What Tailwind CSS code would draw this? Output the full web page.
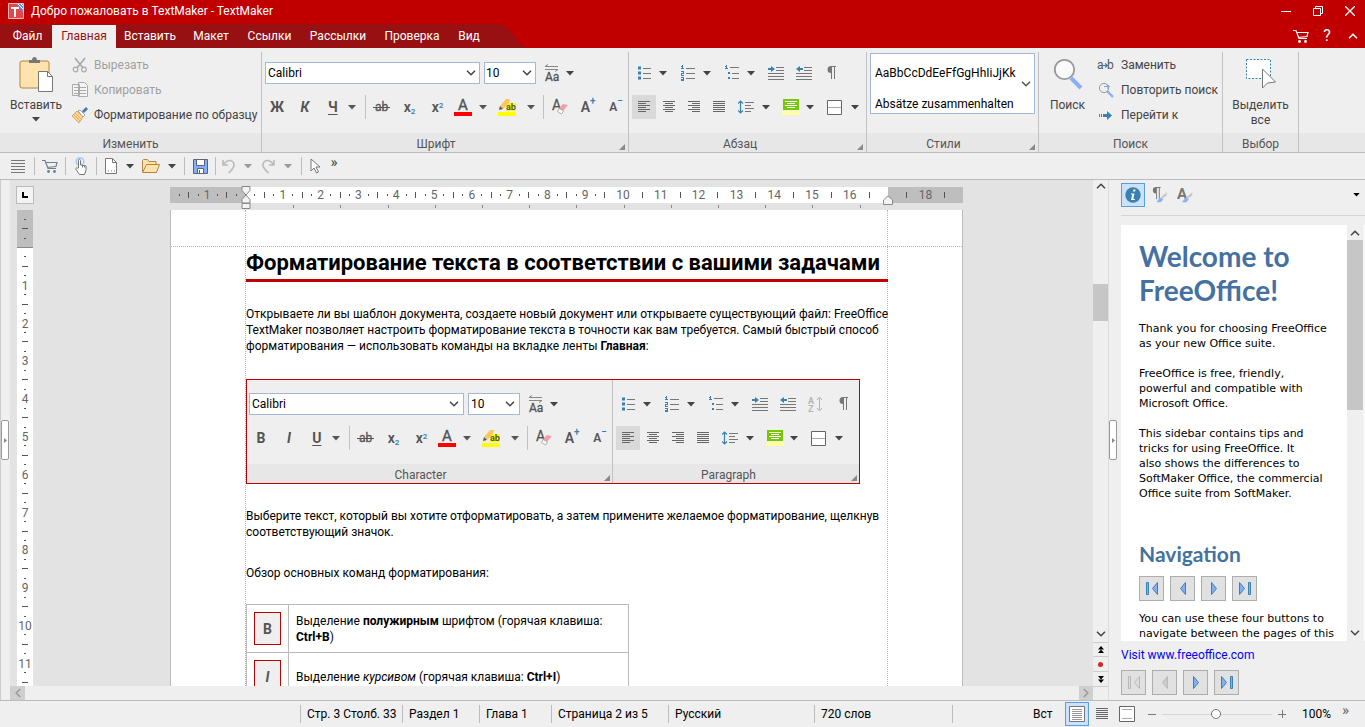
<!DOCTYPE html>
<html lang="ru">
<head>
<meta charset="utf-8">
<title>Добро пожаловать в TextMaker - TextMaker</title>
<script src="https://cdn.jsdelivr.net/npm/@tailwindcss/browser@4"></script>
</head>
<body class="h-screen flex flex-col overflow-hidden bg-[#efefef] text-[12px] leading-[16px] text-[#333] font-['Roboto','Noto_Sans',sans-serif]">

<svg width="0" height="0" class="hidden">
  <symbol id="caret" viewBox="0 0 8 5"><path d="M0 0h8L4 4.5z" fill="currentColor"/></symbol>
  <symbol id="chev" viewBox="0 0 10 6"><path d="M1 .8l4 4 4-4" fill="none" stroke="currentColor" stroke-width="1.5"/></symbol>
  <symbol id="corner" viewBox="0 0 6 6"><path d="M6 0v6H0z" fill="#8a8a8a"/></symbol>
  <symbol id="aa" viewBox="0 0 18 18"><path d="M1 2.5h13M4 .5L1 2.5M1 5.5h13M11 7.5l3-2" stroke="#888" fill="none"/><text x="1" y="17" font-size="12" fill="#555" stroke="#555" stroke-width=".3">Aa</text></symbol>
  <symbol id="strike" viewBox="0 0 18 14"><text x="2" y="11" font-size="12" fill="#555" stroke="#555" stroke-width=".3">ab</text><path d="M0 7.500h17" stroke="#555"/></symbol>
  <symbol id="fcolor" viewBox="0 0 18 18"><text x="4" y="12" font-size="15" fill="#555" stroke="#555" stroke-width=".4">A</text><path d="M0 14h18v4H0z" fill="#f00"/></symbol>
  <symbol id="hilite" viewBox="0 0 18 18"><path d="M8 5h10v8H8z" fill="#ff0"/><path d="M2 8L8 1h4l-1 4-6 6z" fill="#ffc65c"/><path d="M2 8l3 3-4 1z" fill="#555"/><text x="8" y="12" font-size="9" font-weight="700" fill="#555">ab</text><path d="M0 14h18v4H0z" fill="#ff0"/></symbol>
  <symbol id="eraser" viewBox="0 0 18 18"><text x="1" y="12" font-size="14" fill="#555" stroke="#555" stroke-width=".3">A</text><path d="M12 6l5 1-5 6-4-3z" fill="#f5a0a8"/><path d="M6.500 13.500l2-3 4 2.500-2 3z" fill="#fff" stroke="#999" stroke-width=".8"/></symbol>
  <symbol id="bullets" viewBox="0 0 14 14"><path d="M0 .5h3v3H0zM0 5.500h3v3H0zM0 10.500h3v3H0z" fill="#3a80b0"/><path d="M5 2.500h8M5 7.500h8M5 12.500h8" stroke="#777"/></symbol>
  <symbol id="numbers" viewBox="0 0 14 16"><path d="M0 1.500h2M1.500 0v4M0 3.500h3M0 6.500h3M2.500 6v2M0 8.500h3M.5 8v2.500M0 10.500h3M0 12.500h3M0 14.500h3M2.500 12v4M0 15.500h3" stroke="#3a80b0" fill="none"/><path d="M5 3.500h9M5 8.500h9M5 13.500h9" stroke="#777"/></symbol>
  <symbol id="multi" viewBox="0 0 14 16"><path d="M0 1.500h2M1.500 0v4M0 3.500h3" stroke="#3a80b0"/><path d="M3 7h2v2H3zM3 12h2v2H3z" fill="#3a80b0"/><path d="M5 2.500h9M7 8.500h7M7 13.500h7" stroke="#777"/></symbol>
  <symbol id="indent" viewBox="0 0 16 16"><path d="M8 2.500h8M8 5.500h8M0 8.500h16M0 11.500h16M0 14.500h16" stroke="#777"/><path d="M0 3h3V1l4 3-4 3V5H0z" fill="#3a80b0"/></symbol>
  <symbol id="outdent" viewBox="0 0 16 16"><path d="M8 2.500h8M8 5.500h8M0 8.500h16M0 11.500h16M0 14.500h16" stroke="#777"/><path d="M7 3H4V1L0 4l4 3V5h3z" fill="#3a80b0"/></symbol>
  <symbol id="sort" viewBox="0 0 16 16"><text x="0" y="8" font-size="9" font-weight="700" fill="#b5b5b5">A</text><text x="0" y="16" font-size="9" font-weight="700" fill="#b5b5b5">Z</text><path d="M11.500 2v12M9 4l2.500-3L14 4M9 12l2.500 3 2.500-3" stroke="#b5b5b5" fill="none"/></symbol>
  <symbol id="pilcrow" viewBox="0 0 10 14"><path d="M4 0h5v1H4zM4 0a3.500 3.500 0 0 0 0 7z" fill="#777"/><path d="M4.500 0v13M7.500 0v13" stroke="#777"/></symbol>
  <symbol id="al" viewBox="0 0 12 12"><path d="M0 .5h12M0 2.500h8M0 4.500h12M0 6.500h8M0 8.500h12M0 10.500h8" stroke="#666"/></symbol>
  <symbol id="ac" viewBox="0 0 12 12"><path d="M0 .5h12M2 2.500h8M0 4.500h12M2 6.500h8M0 8.500h12M2 10.500h8" stroke="#666"/></symbol>
  <symbol id="ar" viewBox="0 0 12 12"><path d="M0 .5h12M4 2.500h8M0 4.500h12M4 6.500h8M0 8.500h12M4 10.500h8" stroke="#666"/></symbol>
  <symbol id="aj" viewBox="0 0 12 12"><path d="M0 .5h12M0 2.500h12M0 4.500h12M0 6.500h12M0 8.500h12M0 10.500h12" stroke="#666"/></symbol>
  <symbol id="spacing" viewBox="0 0 16 14"><path d="M2.500 1v12M0 3.500L2.500 1 5 3.500M0 10.500L2.500 13 5 10.500" stroke="#3a80b0" fill="none" stroke-width="1.200"/><path d="M7 2.500h9M7 5.500h6M7 8.500h9M7 11.500h6" stroke="#777"/></symbol>
  <symbol id="shade" viewBox="0 0 18 16"><path d="M1 0h16v11H1z" fill="#76c800"/><path d="M0 12h18v4H0z" fill="#ffff9e"/><path d="M3 2.500h12M5 4.500h8M3 6.500h12M5 8.500h8" stroke="#fff"/></symbol>
  <symbol id="borders" viewBox="0 0 15 15"><path d="M.5.5h14v14H.5z" fill="#fff" stroke="#666"/><path d="M1 7.500h13" stroke="#aaa"/></symbol>
  <symbol id="cart" viewBox="0 0 16 15"><path d="M0 1.500h3l3 8h8M4 3.500h11l-1 4-9 1" stroke="currentColor" fill="none" stroke-width="1.200"/><circle cx="6.500" cy="12.500" r="1.400" fill="currentColor"/><circle cx="12.500" cy="12.500" r="1.400" fill="currentColor"/></symbol>
  <symbol id="first" viewBox="0 0 12 14"><path d="M.5.5h2v12h-2zM11.500.5v12l-5-6z" fill="#85aef8" stroke="#3a80b0"/></symbol>
  <symbol id="prev" viewBox="0 0 12 14"><path d="M8.500.5v12l-5-6z" fill="#85aef8" stroke="#3a80b0"/></symbol>
  <symbol id="next" viewBox="0 0 12 14"><path d="M3.500.5v12l5-6z" fill="#85aef8" stroke="#3a80b0"/></symbol>
  <symbol id="last" viewBox="0 0 12 14"><path d="M9.500.5h2v12h-2zM.5.5v12l5-6z" fill="#85aef8" stroke="#3a80b0"/></symbol>
  <symbol id="firstoff" viewBox="0 0 12 14"><path d="M.5.5h2v12h-2zM11.500.5v12l-5-6z" fill="#ddd" stroke="#b8b8b8"/></symbol>
  <symbol id="prevoff" viewBox="0 0 12 14"><path d="M8.500.5v12l-5-6z" fill="#ccc" stroke="#b8b8b8"/></symbol>
  <symbol id="undo" viewBox="0 0 14 15"><path d="M1 1v5h5M1.500 5.500C4 1.500 8 .5 10.500 2.500c3 2.500 2 6-4 11.500" fill="none" stroke="#bbb" stroke-width="1.600"/></symbol>
  <symbol id="brush" viewBox="0 0 8 8"><path d="M7.500 0v2.500L4 5 3 4z" fill="#c8c8c8"/><path d="M0 7.500l2.500-3.500L5 5.500 3 7.500z" fill="#8ab0f8"/></symbol>
</svg>

<!-- Title bar -->
<header class="bg-[#c00000] text-white">
  <div class="h-6 flex items-center pl-2 pb-[2px]">
    <svg class="w-4 h-4 mr-[7px]" viewBox="0 0 16 16"><path d="M.5.5h15v15H.5z" fill="#e0484a" stroke="#f3b9b9"/><path d="M8 1h7v9z" fill="#5a8fe0"/><path d="M10 1l5 5M13 1l2 2" stroke="#fff"/><path d="M3 4h8v2H8v8H6V6H3z" fill="#fff"/></svg>
    <h1 class="whitespace-nowrap">Добро пожаловать в TextMaker - TextMaker</h1>
    <div class="ml-auto flex items-center">
      <button aria-label="Свернуть" class="w-8 h-[22px] flex items-center justify-center"><svg class="w-[10px] h-[10px]" viewBox="0 0 10 10"><path d="M0 5.500h10" stroke="#fff"/></svg></button>
      <button aria-label="Восстановить" class="w-8 h-[22px] flex items-center justify-center"><svg class="w-[10px] h-[10px]" viewBox="0 0 10 10"><path d="M.5 2.500h7v7h-7zM2.500 2.500v-2h7v7h-2" fill="none" stroke="#fff"/></svg></button>
      <button aria-label="Закрыть" class="w-[31px] h-[22px] flex items-center justify-center"><svg class="w-[10px] h-[10px]" viewBox="0 0 10 10"><path d="M0 0l10 10M10 0L0 10" stroke="#fff" stroke-width="1.300"/></svg></button>
    </div>
  </div>
  <nav class="h-6 flex items-stretch">
    <div class="flex bg-[#981012]">
      <button class="w-[52px] pl-[3px] text-center">Файл</button>
      <button class="w-16 mt-px pb-[2px] bg-[#efefef] text-[#981012] text-center">Главная</button>
      <button class="w-[68px] text-center">Вставить</button>
      <button class="w-[54px] text-center">Макет</button>
      <button class="w-[63px] text-center">Ссылки</button>
      <button class="w-[74px] text-center">Рассылки</button>
      <button class="w-[74px] text-center">Проверка</button>
      <button class="w-10 text-center">Вид</button>
    </div>
    <svg class="w-11 h-6" viewBox="0 0 44 24"><path d="M0 0h8c16 0 18 24 34 24H0z" fill="#981012"/></svg>
    <div class="ml-auto flex items-center">
      <button aria-label="Магазин" class="w-[26px] flex justify-center"><svg class="w-4 h-[15px]"><use href="#cart"/></svg></button>
      <button aria-label="Справка" class="w-[26px] text-center text-[16px]">?</button>
      <button aria-label="Свернуть ленту" class="w-[25px] flex justify-center"><svg class="w-[10px] h-[6px] rotate-180"><use href="#chev"/></svg></button>
    </div>
  </nav>
</header>

<!-- Ribbon -->
<section class="h-[105px] shrink-0 flex border-b border-[#bcbcbc] pt-1 bg-[linear-gradient(#efefef_85px,#e7e7e7_85px)] text-[#444]">
  <div class="w-[262px] shrink-0 flex flex-col border-r border-[#c2c2c2]">
    <div class="h-[81px] flex">
      <button class="w-[72px] shrink-0 flex flex-col items-center pt-[5px]">
        <svg class="w-[34px] h-9" viewBox="0 0 34 36"><rect x="1" y="4" width="29" height="27" rx="2" fill="#ffe3ae" stroke="#b5833f"/><path d="M10 6V3h3c0-4 5-4 5 0h3v3z" fill="#777"/><path d="M19.500 14.500h9l5 5v15h-14z" fill="#fff" stroke="#777"/><path d="M28.500 14.500v5h5" fill="none" stroke="#777"/></svg>
        <span class="mt-1">Вставить</span>
        <svg class="w-2 h-[5px] mt-1"><use href="#caret"/></svg>
      </button>
      <div class="flex flex-col">
        <button disabled class="h-[25px] flex items-center text-[#a0a0a0]"><svg class="w-4 h-4 mr-[6px]" viewBox="0 0 16 16"><path d="M3 1l8 10M13 1L5 11" stroke="#aaa" stroke-width="1.800"/><circle cx="3.500" cy="12.500" r="2.300" fill="none" stroke="#aaa" stroke-width="1.200"/><circle cx="12" cy="12.500" r="2.300" fill="none" stroke="#aaa" stroke-width="1.200"/></svg>Вырезать</button>
        <button disabled class="h-[25px] flex items-center text-[#a0a0a0]"><svg class="w-4 h-4 mr-[6px]" viewBox="0 0 16 16"><path d="M.5 2.500h7v11h-7zM6.500.5h6l3 3v11h-9z" fill="#f4f4f4" stroke="#aaa"/><path d="M2 5.500h4M2 8.500h4M2 11.500h4M8 5.500h6M8 8.500h6M8 11.500h6" stroke="#aaa"/></svg>Копировать</button>
        <button class="h-[25px] flex items-center whitespace-nowrap"><svg class="w-4 h-4 mr-[6px]" viewBox="0 0 16 16"><path d="M5 4l6 6-4 6-7-7z" fill="#ffd692" stroke="#c79a5a" stroke-width=".8"/><path d="M3 6l6 6M2 8l6 6" stroke="#e8ae60"/><path d="M6 4l2-1 5 5-2 2z" fill="#fff" stroke="#888" stroke-width=".8"/><path d="M10 4l4-4 2 2-4 4z" fill="#3f7fae"/></svg>Форматирование по образцу</button>
      </div>
    </div>
    <div class="h-[19px] leading-[23px] text-center text-[#555]">Изменить</div>
  </div>

  <div class="w-[367px] shrink-0 flex flex-col border-r border-[#c2c2c2]">
    <div class="h-[81px] pl-[3px] flex flex-col">
      <div class="flex items-center pt-[10px] h-8">
        <label class="relative w-[215px] mr-1"><select aria-label="Шрифт" class="appearance-none block w-full h-[22px] pl-[2px] bg-white border border-[#a3b8d6] text-black leading-[18px]"><option>Calibri</option></select><svg class="absolute right-1 top-[8px] w-[10px] h-[6px] pointer-events-none"><use href="#chev"/></svg></label>
        <label class="relative w-[52px] mr-2"><select aria-label="Размер" class="appearance-none block w-full h-[22px] pl-[1px] bg-white border border-[#a3b8d6] text-black leading-[18px]"><option>10</option></select><svg class="absolute right-1 top-[8px] w-[10px] h-[6px] pointer-events-none"><use href="#chev"/></svg></label>
        <button aria-label="Регистр" class="flex items-center gap-1"><svg class="w-[18px] h-[18px]"><use href="#aa"/></svg><svg class="w-2 h-[5px]"><use href="#caret"/></svg></button>
      </div>
      <div class="flex items-center h-6 mt-[11px] text-[14px] text-[#555]">
        <button class="w-6 font-bold">Ж</button>
        <button class="w-8 font-bold italic">К</button>
        <button class="w-6 font-bold underline underline-offset-2">Ч</button>
        <button aria-label="Вид подчеркивания" class="w-[14px] flex justify-center"><svg class="w-2 h-[5px]"><use href="#caret"/></svg></button>
        <span class="w-px h-6 bg-[#c2c2c2] mx-[6px]"></span>
        <button aria-label="Зачеркнутый" class="w-5 flex justify-center"><svg class="w-[18px] h-[14px]"><use href="#strike"/></svg></button>
        <button class="w-9 font-semibold">x<sub class="text-[8px] text-[#3a80b0]">2</sub></button>
        <button class="w-5 font-semibold">x<sup class="text-[8px] text-[#3a80b0]">2</sup></button>
        <button aria-label="Цвет шрифта" class="w-8 flex justify-center"><svg class="w-[18px] h-[18px]"><use href="#fcolor"/></svg></button>
        <button aria-label="Выбрать цвет" class="w-2"><svg class="w-2 h-[5px]"><use href="#caret"/></svg></button>
        <button aria-label="Выделение" class="w-10 flex justify-center"><svg class="w-[18px] h-[18px]"><use href="#hilite"/></svg></button>
        <button aria-label="Цвет выделения" class="w-2"><svg class="w-2 h-[5px]"><use href="#caret"/></svg></button>
        <span class="w-px h-6 bg-[#c2c2c2] ml-2 mr-1"></span>
        <button aria-label="Очистить формат" class="w-6 flex justify-center"><svg class="w-[18px] h-[18px]"><use href="#eraser"/></svg></button>
        <button class="w-8 h-6 flex justify-center items-center font-semibold">A<span class="self-start text-[10px] leading-3 text-[#3a80b0]">+</span></button>
        <button class="w-6 h-6 flex justify-center items-center font-semibold text-[12px]">A<span class="self-start text-[10px] leading-3 text-[#3a80b0]">−</span></button>
      </div>
    </div>
    <div class="relative h-[19px] leading-[23px] text-center text-[#555] pr-[18px]">Шрифт<svg class="absolute right-[3px] bottom-[2px] w-[6px] h-[6px]"><use href="#corner"/></svg></div>
  </div>

  <div class="w-[238px] shrink-0 flex flex-col border-r border-[#c2c2c2]">
    <div class="h-[81px] pl-[3px] flex flex-col">
      <div class="flex items-center pt-[10px] h-8">
        <button aria-label="Маркеры" class="w-[38px] flex items-center gap-[7px] pl-[6px]"><svg class="w-[14px] h-[14px] shrink-0"><use href="#bullets"/></svg><svg class="w-2 h-[5px] shrink-0"><use href="#caret"/></svg></button>
        <button aria-label="Нумерация" class="w-11 flex items-center gap-2 pl-[11px]"><svg class="w-[14px] h-4 shrink-0"><use href="#numbers"/></svg><svg class="w-2 h-[5px] shrink-0"><use href="#caret"/></svg></button>
        <button aria-label="Многоуровневый список" class="w-12 flex items-center gap-2 pl-[11px]"><svg class="w-[14px] h-4 shrink-0"><use href="#multi"/></svg><svg class="w-2 h-[5px] shrink-0"><use href="#caret"/></svg></button>
        <button aria-label="Увеличить отступ" class="w-7 flex justify-center"><svg class="w-4 h-4"><use href="#indent"/></svg></button>
        <button aria-label="Уменьшить отступ" class="w-7 flex justify-center"><svg class="w-4 h-4"><use href="#outdent"/></svg></button>
        <button aria-label="Непечатаемые знаки" class="w-7 flex justify-center"><svg class="w-[10px] h-[14px]"><use href="#pilcrow"/></svg></button>
      </div>
      <div class="flex items-center h-6 mt-[11px]">
        <button aria-label="По левому краю" class="w-6 h-6 flex items-center justify-center bg-[#d9d9d9] mr-px"><svg class="w-3 h-3"><use href="#al"/></svg></button>
        <button aria-label="По центру" class="w-6 h-6 flex items-center justify-center mr-px"><svg class="w-3 h-3"><use href="#ac"/></svg></button>
        <button aria-label="По правому краю" class="w-6 h-6 flex items-center justify-center mr-px"><svg class="w-3 h-3"><use href="#ar"/></svg></button>
        <button aria-label="По ширине" class="w-6 h-6 flex items-center justify-center"><svg class="w-3 h-3"><use href="#aj"/></svg></button>
        <button aria-label="Интервал" class="w-11 flex items-center gap-2 pl-[7px]"><svg class="w-4 h-[14px] shrink-0"><use href="#spacing"/></svg><svg class="w-2 h-[5px] shrink-0"><use href="#caret"/></svg></button>
        <button aria-label="Заливка" class="w-11 flex items-center gap-[6px] pl-[7px]"><svg class="w-[18px] h-4 shrink-0"><use href="#shade"/></svg><svg class="w-2 h-[5px] shrink-0"><use href="#caret"/></svg></button>
        <button aria-label="Границы" class="w-11 flex items-center gap-[9px] pl-2"><svg class="w-[15px] h-[15px] shrink-0"><use href="#borders"/></svg><svg class="w-2 h-[5px] shrink-0"><use href="#caret"/></svg></button>
      </div>
    </div>
    <div class="relative h-[19px] leading-[23px] text-center text-[#555] pr-[15px]">Абзац<svg class="absolute right-[3px] bottom-[2px] w-[6px] h-[6px]"><use href="#corner"/></svg></div>
  </div>

  <div class="w-[172px] shrink-0 flex flex-col border-r border-[#c2c2c2]">
    <div class="h-[81px] px-[3px] pt-px">
      <button class="relative w-full h-[61px] border border-[#a3b8d6] bg-white text-black text-left pl-1 pt-[11px] flex flex-col gap-[15px] leading-4 whitespace-nowrap"><span>AaBbCcDdEeFfGgHhIiJjKk</span><span>Absätze zusammenhalten</span><svg class="absolute right-[3px] top-[27px] w-[10px] h-[6px] text-[#555]"><use href="#chev"/></svg></button>
    </div>
    <div class="relative h-[19px] leading-[23px] text-center text-[#555] pr-[18px]">Стили<svg class="absolute right-[3px] bottom-[2px] w-[6px] h-[6px]"><use href="#corner"/></svg></div>
  </div>

  <div class="w-[184px] shrink-0 flex flex-col border-r border-[#c2c2c2]">
    <div class="h-[81px] flex">
      <button class="w-[57px] shrink-0 flex flex-col items-center pt-[6px]">
        <svg class="w-[30px] h-8" viewBox="0 0 30 32"><path d="M18 20l10 10" stroke="#8aaefa" stroke-width="4"/><circle cx="11.500" cy="11.500" r="9.700" fill="#fafafa" stroke="#999" stroke-width="1.800"/></svg>
        <span class="mt-[7px]">Поиск</span>
      </button>
      <div class="flex flex-col">
        <button class="h-[25px] flex items-center"><svg class="w-[19px] h-4 mr-[6px]" viewBox="0 0 19 16"><text x="1" y="12" font-size="12" fill="#555">a</text><text x="11" y="12" font-size="12" fill="#555">b</text><path d="M7 8.500h4M9 6.500l2.500 2-2.500 2" stroke="#3a80b0" fill="none" stroke-width="1.200"/></svg>Заменить</button>
        <button class="h-[25px] flex items-center whitespace-nowrap"><svg class="w-[19px] h-4 mr-[6px]" viewBox="0 0 19 16"><path d="M11 9l6 6" stroke="#8aaefa" stroke-width="2.400"/><circle cx="8" cy="6" r="4.600" fill="none" stroke="#999"/><path d="M8 4.500h5M11 2.500l2.500 2-2.500 2" stroke="#7aa0f0" fill="none"/></svg>Повторить поиск</button>
        <button class="h-[25px] flex items-center"><svg class="w-[19px] h-4 mr-[6px]" viewBox="0 0 19 16"><path d="M3 7h1v3H3zM5 7h1v3H5zM7 7h4V4l5 4.500-5 4.500v-3H7z" fill="#3a80b0"/></svg>Перейти к</button>
      </div>
    </div>
    <div class="h-[19px] leading-[23px] text-center text-[#555]">Поиск</div>
  </div>

  <div class="w-[76px] shrink-0 flex flex-col border-r border-[#c2c2c2]">
    <div class="h-[81px]">
      <button class="w-full flex flex-col items-center pt-[6px] leading-[15px]">
        <svg class="w-[34px] h-8" viewBox="0 0 34 32"><path d="M2.500 1.500h24v19h-24z" fill="#fff" stroke="#3a80b0" stroke-dasharray="2 1.500"/><path d="M18.500 11v19l5-5 8-1z" fill="#fff" stroke="#777"/></svg>
        <span class="mt-2">Выделить<br>все</span>
      </button>
    </div>
    <div class="h-[19px] leading-[23px] text-center text-[#555]">Выбор</div>
  </div>
</section>

<!-- Quick access toolbar -->
<div class="h-[27px] shrink-0 flex items-center border-b border-[#bcbcbc] text-[#444]" role="toolbar">
  <button aria-label="Меню" class="w-[34px] flex justify-center pl-[2px]"><svg class="w-[14px] h-[13px]" viewBox="0 0 14 13"><path d="M0 .5h14M0 3.500h14M0 6.500h14M0 9.500h14M0 12.500h14" stroke="#777"/></svg></button>
  <span class="w-px h-[18px] bg-[#bcbcbc]"></span>
  <button aria-label="Магазин" class="w-[30px] flex justify-center text-[#6b7f90]"><svg class="w-4 h-[15px]"><use href="#cart"/></svg></button>
  <span class="w-px h-[18px] bg-[#bcbcbc]"></span>
  <button aria-label="Сенсорный режим" class="w-[30px] flex justify-center"><svg class="w-4 h-[18px]" viewBox="0 0 16 18"><circle cx="7" cy="4.500" r="3.800" fill="none" stroke="#a8c4fa" stroke-width="1.500"/><path d="M5.500 11V3.500c0-1.500 2-1.500 2 0V8l5.500 1v4l-1.500 4.500h-5L3 12.500c-.8-1.500.8-2.500 2.500-.5M9.500 8v2.500M11.500 8.500v2" fill="#fff" stroke="#777"/></svg></button>
  <span class="w-px h-[18px] bg-[#bcbcbc]"></span>
  <button aria-label="Создать" class="w-[27px] flex justify-center"><svg class="w-3 h-4" viewBox="0 0 12 16"><path d="M.5.5h7l4 4v11H.5z" fill="#fff" stroke="#777"/><path d="M7.500.5v4h4" fill="none" stroke="#777"/><path d="M3 13h1M6 13h1M9 13h1" stroke="#777"/></svg></button>
  <button aria-label="Варианты создания" class="w-3 flex justify-center"><svg class="w-2 h-[5px]"><use href="#caret"/></svg></button>
  <button aria-label="Открыть" class="w-[30px] flex justify-center"><svg class="w-[18px] h-[14px]" viewBox="0 0 18 14"><path d="M.5 12.500V1.500l1-1h4l1.500 2h7v3" fill="#ffe3ae" stroke="#b5833f"/><path d="M.5 13.500l4-8h13l-3 8z" fill="#ffe3ae" stroke="#b5833f"/></svg></button>
  <button aria-label="Последние файлы" class="w-[11px] flex justify-center"><svg class="w-2 h-[5px]"><use href="#caret"/></svg></button>
  <span class="w-px h-[18px] bg-[#bcbcbc] ml-[7px]"></span>
  <button aria-label="Сохранить" class="w-[30px] flex justify-center"><svg class="w-[15px] h-[15px]" viewBox="0 0 15 15"><path d="M.5.5h14v14H.5z" fill="#85aef8" stroke="#567"/><path d="M3.500.5h8v6h-8zM4.500 9.500h6v5h-6z" fill="#fff" stroke="#567"/><path d="M6 11h1v3H6z" fill="#567"/></svg></button>
  <span class="w-px h-[18px] bg-[#bcbcbc]"></span>
  <button aria-label="Отменить" class="w-[26px] flex justify-center"><svg class="w-[14px] h-[15px]"><use href="#undo"/></svg></button>
  <button aria-label="Список отмены" class="w-3 flex justify-center text-[#999]"><svg class="w-2 h-[5px]"><use href="#caret"/></svg></button>
  <button aria-label="Повторить" class="w-7 flex justify-center"><svg class="w-[14px] h-[15px] -scale-x-100"><use href="#undo"/></svg></button>
  <button aria-label="Список повтора" class="w-3 flex justify-center text-[#999]"><svg class="w-2 h-[5px]"><use href="#caret"/></svg></button>
  <span class="w-px h-[18px] bg-[#bcbcbc] ml-[7px]"></span>
  <button aria-label="Указатель" class="w-[26px] flex justify-center"><svg class="w-[11px] h-[16px]" viewBox="0 0 11 16"><path d="M1 1v12l3-3 2.500 5 2-1L6 9h4z" fill="#fff" stroke="#777"/></svg></button>
  <button aria-label="Еще" class="w-3 pb-2 text-[15px] leading-4">»</button>
</div>

<!-- Workspace -->
<main class="flex-1 min-h-0 flex">
  <div class="w-[10px] shrink-0 border-l border-[#ccc] flex items-center"><button aria-label="Показать панель" class="w-2 h-10 border border-[#999] rounded-[2px] bg-white flex items-center justify-center text-[#888]"><svg class="w-[3px] h-[5px]" viewBox="0 0 3 5"><path d="M0 0v5l3-2.500z" fill="currentColor"/></svg></button></div>

  <div class="flex-1 min-w-0 flex flex-col">
    <div class="flex-1 min-h-0 flex bg-[#e3e3e3]">
      <div class="w-[30px] shrink-0 pl-[6px] pt-[6px] flex flex-col">
        <button aria-label="Тип табуляции" class="w-[18px] h-[18px] shrink-0 border border-[#bbb] bg-[#f3f3f3] flex items-center justify-center"><svg class="w-[6px] h-[6px]" viewBox="0 0 6 6"><path d="M1 0v5h5" stroke="#000" stroke-width="2" fill="none"/></svg></button>
        <svg id="vruler" class="w-4 flex-1 min-h-0 mt-[6px] ml-px bg-white"><rect width="16" height="37" fill="#bebebe"/><path d="M0 37.500h16" stroke="#888"/></svg>
      </div>

      <div class="flex-1 min-w-0 flex flex-col items-center overflow-hidden pt-[7px]">
        <div class="w-[793px] shrink-0 relative">
          <svg id="hruler" class="block w-full h-[23px]"><rect width="793" height="16" fill="#fff"/><rect width="76" height="16" fill="#bebebe"/><rect x="718" width="75" height="16" fill="#bebebe"/></svg>
          <svg class="absolute left-[71px] -top-[1px] w-[10px] h-[24px]" viewBox="0 0 10 24"><path d="M1 .5h8v4L5 9 1 4.500zM1 17v-3.500L5 9l4 4.500V17zM1 17.500h8v5H1z" fill="#f3f3f3" stroke="#888"/></svg>
          <svg class="absolute left-[713px] top-[8px] w-[10px] h-[10px]" viewBox="0 0 10 10"><path d="M.5 9.500V5L5 .8 9.500 5v4.500z" fill="#f3f3f3" stroke="#888"/></svg>
        </div>

        <article class="relative w-[793px] flex-1 min-h-0 overflow-hidden bg-white border-x border-[#bbb] text-black pl-[75px] pr-[74px] pt-9">
          <div class="absolute left-0 right-0 top-9 border-t border-dotted border-[#b5b5b5]"></div>
          <div class="absolute left-[74px] right-[74px] inset-y-0 border-x border-dotted border-[#b5b5b5]"></div>
          <h2 class="relative h-9 border-b-[3px] border-[#c00000] text-[22px] leading-[33px] font-bold whitespace-nowrap">Форматирование текста в соответствии с вашими задачами</h2>
          <p class="relative mt-6 leading-4 whitespace-nowrap">Открываете ли вы шаблон документа, создаете новый документ или открываете существующий файл: FreeOffice<br>TextMaker позволяет настроить форматирование текста в точности как вам требуется. Самый быстрый способ<br>форматирования — использовать команды на вкладке ленты <b>Главная</b>:</p>

          <figure class="relative mt-[25px] w-[614px] h-[105px] border border-[#c00000] flex text-[#444] bg-[linear-gradient(#efefef_84px,#e7e7e7_84px)]">
            <div class="w-[366px] flex flex-col border-r border-[#c2c2c2]">
              <div class="h-[84px] pl-[2px] pt-[3px]">
                <div class="flex items-center pt-[10px] h-8">
                  <span class="w-[215px] h-[22px] mr-1 pl-[2px] pr-1 bg-white border border-[#a3b8d6] text-black flex items-center justify-between">Calibri<svg class="w-[10px] h-[6px] text-[#444]"><use href="#chev"/></svg></span>
                  <span class="w-[52px] h-[22px] mr-2 pl-[2px] pr-1 bg-white border border-[#a3b8d6] text-black flex items-center justify-between">10<svg class="w-[10px] h-[6px] text-[#444]"><use href="#chev"/></svg></span>
                  <span class="flex items-center gap-1"><svg class="w-[18px] h-[18px]"><use href="#aa"/></svg><svg class="w-2 h-[5px]"><use href="#caret"/></svg></span>
                </div>
                <div class="flex items-center h-6 mt-[11px] text-[14px] text-[#555] text-center">
                  <b class="w-6">B</b><i class="w-8 font-bold">I</i><b class="w-6 underline underline-offset-2">U</b>
                  <span class="w-[14px] flex justify-center"><svg class="w-2 h-[5px]"><use href="#caret"/></svg></span>
                  <span class="w-px h-6 bg-[#c2c2c2] mx-[6px]"></span>
                  <span class="w-5 flex justify-center"><svg class="w-[18px] h-[14px]"><use href="#strike"/></svg></span>
                  <span class="w-9 font-semibold">x<sub class="text-[8px] text-[#3a80b0]">2</sub></span>
                  <span class="w-5 font-semibold">x<sup class="text-[8px] text-[#3a80b0]">2</sup></span>
                  <span class="w-8 flex justify-center"><svg class="w-[18px] h-[18px]"><use href="#fcolor"/></svg></span>
                  <svg class="w-2 h-[5px]"><use href="#caret"/></svg>
                  <span class="w-10 flex justify-center"><svg class="w-[18px] h-[18px]"><use href="#hilite"/></svg></span>
                  <svg class="w-2 h-[5px]"><use href="#caret"/></svg>
                  <span class="w-px h-6 bg-[#c2c2c2] ml-2 mr-1"></span>
                  <span class="w-6 flex justify-center"><svg class="w-[18px] h-[18px]"><use href="#eraser"/></svg></span>
                  <span class="w-8 h-6 flex justify-center items-center font-semibold">A<span class="self-start text-[10px] leading-3 text-[#3a80b0]">+</span></span>
                  <span class="w-6 h-6 flex justify-center items-center font-semibold text-[12px]">A<span class="self-start text-[10px] leading-3 text-[#3a80b0]">−</span></span>
                </div>
              </div>
              <div class="relative h-[19px] leading-[23px] text-center text-[#555] pr-[18px]">Character<svg class="absolute right-[2px] bottom-[2px] w-[6px] h-[6px]"><use href="#corner"/></svg></div>
            </div>
            <div class="flex-1 flex flex-col">
              <div class="h-[84px] pl-[3px] pt-[3px]">
                <div class="flex items-center pt-[10px] h-8">
                  <span class="w-[38px] flex items-center gap-[7px] pl-[6px]"><svg class="w-[14px] h-[14px] shrink-0"><use href="#bullets"/></svg><svg class="w-2 h-[5px] shrink-0"><use href="#caret"/></svg></span>
                  <span class="w-11 flex items-center gap-2 pl-[11px]"><svg class="w-[14px] h-4 shrink-0"><use href="#numbers"/></svg><svg class="w-2 h-[5px] shrink-0"><use href="#caret"/></svg></span>
                  <span class="w-12 flex items-center gap-2 pl-[11px]"><svg class="w-[14px] h-4 shrink-0"><use href="#multi"/></svg><svg class="w-2 h-[5px] shrink-0"><use href="#caret"/></svg></span>
                  <span class="w-7 flex justify-center"><svg class="w-4 h-4"><use href="#indent"/></svg></span>
                  <span class="w-7 flex justify-center"><svg class="w-4 h-4"><use href="#outdent"/></svg></span>
                  <span class="w-7 flex justify-center"><svg class="w-4 h-4"><use href="#sort"/></svg></span>
                  <span class="w-7 flex justify-center"><svg class="w-[10px] h-[14px]"><use href="#pilcrow"/></svg></span>
                </div>
                <div class="flex items-center h-6 mt-[11px]">
                  <span class="w-6 h-6 flex items-center justify-center bg-[#d9d9d9] mr-px"><svg class="w-3 h-3"><use href="#al"/></svg></span>
                  <span class="w-6 h-6 flex items-center justify-center mr-px"><svg class="w-3 h-3"><use href="#ac"/></svg></span>
                  <span class="w-6 h-6 flex items-center justify-center mr-px"><svg class="w-3 h-3"><use href="#ar"/></svg></span>
                  <span class="w-6 h-6 flex items-center justify-center"><svg class="w-3 h-3"><use href="#aj"/></svg></span>
                  <span class="w-11 flex items-center gap-2 pl-[7px]"><svg class="w-4 h-[14px] shrink-0"><use href="#spacing"/></svg><svg class="w-2 h-[5px] shrink-0"><use href="#caret"/></svg></span>
                  <span class="w-11 flex items-center gap-[6px] pl-[7px]"><svg class="w-[18px] h-4 shrink-0"><use href="#shade"/></svg><svg class="w-2 h-[5px] shrink-0"><use href="#caret"/></svg></span>
                  <span class="w-11 flex items-center gap-[9px] pl-2"><svg class="w-[15px] h-[15px] shrink-0"><use href="#borders"/></svg><svg class="w-2 h-[5px] shrink-0"><use href="#caret"/></svg></span>
                </div>
              </div>
              <div class="relative h-[19px] leading-[23px] text-center text-[#555] pr-[15px]">Paragraph<svg class="absolute right-[2px] bottom-[2px] w-[6px] h-[6px]"><use href="#corner"/></svg></div>
            </div>
          </figure>

          <p class="relative mt-6 leading-4 whitespace-nowrap">Выберите текст, который вы хотите отформатировать, а затем примените желаемое форматирование, щелкнув<br>соответствующий значок.</p>
          <p class="relative mt-[25px] leading-4 whitespace-nowrap">Обзор основных команд форматирования:</p>
          <table class="relative mt-[23px] w-[383px] border-collapse">
            <tr class="h-12"><td class="w-[42px] border border-[#bbb] p-0"><span class="mx-auto w-[27px] h-[33px] border border-[#c00000] bg-[#efefef] flex items-center justify-center font-bold text-[14px] text-[#555]">B</span></td><td class="border border-[#bbb] p-0 pl-[7px] whitespace-nowrap">Выделение <b>полужирным</b> шрифтом (горячая клавиша:<br><b>Ctrl+B</b>)</td></tr>
            <tr class="h-12"><td class="border border-[#bbb] p-0"><span class="mx-auto w-[27px] h-[33px] border border-[#c00000] bg-[#efefef] flex items-center justify-center font-bold italic text-[14px] text-[#555]">I</span></td><td class="border border-[#bbb] p-0 pl-[7px] whitespace-nowrap">Выделение <i>курсивом</i> (горячая клавиша: <b>Ctrl+I</b>)</td></tr>
          </table>
        </article>
      </div>
    </div>
    <div class="h-[14px] shrink-0 flex justify-between text-[#999]">
      <button aria-label="Прокрутить влево" class="w-[15px] bg-[#cfcfcf] flex items-center justify-center"><svg class="w-[10px] h-[6px] rotate-90"><use href="#chev"/></svg></button>
      <button aria-label="Прокрутить вправо" class="w-[14px] bg-[#cfcfcf] flex items-center justify-center"><svg class="w-[10px] h-[6px] -rotate-90"><use href="#chev"/></svg></button>
    </div>
  </div>

  <!-- Vertical scrollbar -->
  <div class="w-4 shrink-0 flex flex-col text-[#444] border-r border-[#ddd]">
    <button aria-label="Прокрутить вверх" class="h-3 flex items-center justify-center"><svg class="w-[10px] h-[6px] rotate-180"><use href="#chev"/></svg></button>
    <div class="flex-1 pt-[92px]"><div class="h-[37px] bg-[#c6c6c6]"></div></div>
    <button aria-label="Прокрутить вниз" class="h-4 flex items-center justify-center"><svg class="w-[10px] h-[6px]"><use href="#chev"/></svg></button>
    <button aria-label="Предыдущая страница" class="h-[14px] border-t border-[#ccc] flex items-center justify-center"><svg class="w-[6px] h-[8px]" viewBox="0 0 6 8"><path d="M0 3.500L3 0l3 3.500zM0 7l3-3.500L6 7z" fill="#000"/></svg></button>
    <button aria-label="Выбор объекта" class="h-[15px] border-t border-[#ccc] flex items-center justify-center"><span class="w-[5px] h-[5px] rounded-full bg-[#d22]"></span></button>
    <button aria-label="Следующая страница" class="h-[15px] border-t border-[#ccc] flex items-center justify-center"><svg class="w-[6px] h-[8px] rotate-180" viewBox="0 0 6 8"><path d="M0 3.500L3 0l3 3.500zM0 7l3-3.500L6 7z" fill="#000"/></svg></button>
    <div class="h-[14px] border-t border-[#ccc]"></div>
  </div>

  <!-- Sidebar -->
  <aside class="w-64 shrink-0 flex">
    <div class="w-3 flex items-center"><button aria-label="Скрыть панель" class="w-2 h-10 border border-[#999] rounded-[2px] bg-white flex items-center justify-center text-[#888]"><svg class="w-[3px] h-[5px]" viewBox="0 0 3 5"><path d="M0 0v5l3-2.500z" fill="currentColor"/></svg></button></div>
    <div class="flex-1 min-w-0 flex flex-col pt-[3px]">
      <div class="flex items-center h-6">
        <button aria-label="Сведения" class="w-6 h-6 border border-[#5a9de0] bg-[#cce2f8] flex items-center justify-center"><svg class="w-4 h-4" viewBox="0 0 16 16"><circle cx="8" cy="8" r="7.700" fill="#3a80b0"/><path d="M8.500 2.500h2l-.4 2h-2zM6 6.500h3.500L8.300 12h1.500v1H6l1.200-5.500H6z" fill="#fff"/></svg></button>
        <button aria-label="Стили абзацев" class="w-[26px] flex justify-center ml-[2px]"><svg class="w-4 h-4" viewBox="0 0 16 16"><use href="#pilcrow" x="0" y="0" width="10" height="13"/><use href="#brush" x="4" y="5" width="12" height="11"/></svg></button>
        <button aria-label="Стили символов" class="w-6 flex justify-center"><svg class="w-4 h-4" viewBox="0 0 16 16"><text x="0" y="12" font-size="15" font-weight="700" fill="#777">A</text><use href="#brush" x="5" y="5" width="11" height="11"/></svg></button>
        <button aria-label="Параметры панели" class="ml-auto mr-[5px] text-black"><svg class="w-[7px] h-[4px]"><use href="#caret"/></svg></button>
      </div>
      <hr class="mt-2 border-[#d5d5d5]">
      <div class="mt-[9px] flex-1 min-h-0 flex bg-white border-r-2 border-[#f7f7f7]">
        <div class="flex-1 min-w-0 overflow-hidden pl-[18px] text-black font-['DejaVu_Sans',sans-serif] text-[11px] leading-[15px] whitespace-nowrap">
          <h2 class="mt-[14px] font-['Lato','Noto_Sans',sans-serif] font-bold text-[28px] leading-[34px] text-[#4571a0]">Welcome to<br>FreeOffice!</h2>
          <p class="mt-[14px]">Thank you for choosing FreeOffice<br>as your new Office suite.</p>
          <p class="mt-[15px]">FreeOffice is free, friendly,<br>powerful and compatible with<br>Microsoft Office.</p>
          <p class="mt-[15px]">This sidebar contains tips and<br>tricks for using FreeOffice. It<br>also shows the differences to<br>SoftMaker Office, the commercial<br>Office suite from SoftMaker.</p>
          <h3 class="mt-[38px] font-['Lato','Noto_Sans',sans-serif] font-bold text-[21px] leading-[30px] text-[#4571a0]">Navigation</h3>
          <div class="mt-[7px] flex gap-[6px]">
            <button aria-label="Первая" class="w-[25px] h-[25px] border border-[#adadad] bg-[#e1e1e1] flex items-center justify-center"><svg class="w-3 h-[14px]"><use href="#first"/></svg></button>
            <button aria-label="Назад" class="w-[25px] h-[25px] border border-[#adadad] bg-[#e1e1e1] flex items-center justify-center"><svg class="w-3 h-[14px]"><use href="#prev"/></svg></button>
            <button aria-label="Вперед" class="w-[25px] h-[25px] border border-[#adadad] bg-[#e1e1e1] flex items-center justify-center"><svg class="w-3 h-[14px]"><use href="#next"/></svg></button>
            <button aria-label="Последняя" class="w-[25px] h-[25px] border border-[#adadad] bg-[#e1e1e1] flex items-center justify-center"><svg class="w-3 h-[14px]"><use href="#last"/></svg></button>
          </div>
          <p class="mt-[10px]">You can use these four buttons to<br>navigate between the pages of this</p>
        </div>
        <div class="w-4 shrink-0 flex flex-col bg-[#efefef] text-[#444]">
          <button aria-label="Прокрутить вверх" class="h-[15px] flex items-center justify-center"><svg class="w-[10px] h-[6px] rotate-180"><use href="#chev"/></svg></button>
          <div class="h-[170px] bg-[#c6c6c6]"></div>
          <button aria-label="Прокрутить вниз" class="mt-auto h-4 flex items-center justify-center"><svg class="w-[10px] h-[6px]"><use href="#chev"/></svg></button>
        </div>
      </div>
      <div class="h-[59px] shrink-0 pt-[6px]">
        <a href="https://www.freeoffice.com" class="block text-[#0000ff] leading-4 w-fit">Visit www.freeoffice.com</a>
        <div class="mt-[7px] flex gap-[6px]">
          <button disabled aria-label="Первая" class="w-[25px] h-[25px] border border-[#adadad] bg-[#e1e1e1] flex items-center justify-center"><svg class="w-3 h-[14px]"><use href="#firstoff"/></svg></button>
          <button disabled aria-label="Назад" class="w-[25px] h-[25px] border border-[#adadad] bg-[#e1e1e1] flex items-center justify-center"><svg class="w-3 h-[14px]"><use href="#prevoff"/></svg></button>
          <button aria-label="Вперед" class="w-[25px] h-[25px] border border-[#adadad] bg-[#e1e1e1] flex items-center justify-center"><svg class="w-3 h-[14px]"><use href="#next"/></svg></button>
          <button aria-label="Последняя" class="w-[25px] h-[25px] border border-[#adadad] bg-[#e1e1e1] flex items-center justify-center"><svg class="w-3 h-[14px]"><use href="#last"/></svg></button>
        </div>
      </div>
    </div>
  </aside>
</main>

<!-- Status bar -->
<footer class="h-[27px] shrink-0 flex items-center border-t border-[#bcbcbc] text-black whitespace-nowrap">
  <span class="w-[300px] shrink-0"></span>
  <span class="w-[102px] h-[18px] leading-[18px] border-l border-[#bcbcbc] pl-[6px]">Стр. 3 Столб. 33</span>
  <span class="w-[77px] h-[18px] leading-[18px] border-l border-[#bcbcbc] pl-[6px]">Раздел 1</span>
  <span class="w-[72px] h-[18px] leading-[18px] border-l border-[#bcbcbc] pl-[6px]">Глава 1</span>
  <span class="w-[117px] h-[18px] leading-[18px] border-l border-[#bcbcbc] pl-[6px]">Страница 2 из 5</span>
  <span class="w-[146px] h-[18px] leading-[18px] border-l border-[#bcbcbc] pl-[6px]">Русский</span>
  <span class="w-[138px] h-[18px] leading-[18px] border-l border-[#bcbcbc] pl-[6px]">720 слов</span>
  <span class="flex-1 h-[18px] border-l border-[#bcbcbc]"></span>
  <span class="w-8 h-[18px] leading-[18px]">Вст</span>
  <button aria-label="Обычный" class="w-6 h-6 border border-[#5a9de0] bg-[#cce2f8] flex items-center justify-center"><svg class="w-4 h-4" viewBox="0 0 16 16"><path d="M.5.5h15v15H.5z" fill="#fff" stroke="#777"/><path d="M3 3.500h10M3 5.500h10M3 7.500h10M3 9.500h10M3 11.500h10M3 13.500h10" stroke="#999"/></svg></button>
  <button aria-label="Непрерывный" class="w-[26px] flex justify-center"><svg class="w-3 h-3" viewBox="0 0 12 12"><path d="M0 .5h12M0 2.500h12M0 4.500h12M0 6.500h12M0 8.500h12M0 10.500h12" stroke="#666"/></svg></button>
  <button aria-label="Структура" class="w-6 flex justify-center"><svg class="w-4 h-4" viewBox="0 0 16 16"><path d="M.5.5h15v15H.5z" fill="#fff" stroke="#666"/><path d="M3 3.500h10M3 12.500h10" stroke="#aaa"/></svg></button>
  <button aria-label="Уменьшить" class="ml-[6px] w-[14px] flex justify-center"><svg class="w-2 h-2" viewBox="0 0 8 8"><path d="M0 4.500h8" stroke="#777"/></svg></button>
  <input type="range" aria-label="Масштаб" min="0" max="100" value="49" class="appearance-none w-[110px] h-4 mx-[3px] bg-[linear-gradient(#d5d5d5,#d5d5d5)] bg-no-repeat bg-center bg-[length:100%_1px] [&::-webkit-slider-thumb]:appearance-none [&::-webkit-slider-thumb]:w-[10px] [&::-webkit-slider-thumb]:h-[10px] [&::-webkit-slider-thumb]:rounded-full [&::-webkit-slider-thumb]:border [&::-webkit-slider-thumb]:border-[#777] [&::-webkit-slider-thumb]:bg-white">
  <button aria-label="Увеличить" class="w-[14px] flex justify-center"><svg class="w-2 h-2" viewBox="0 0 8 8"><path d="M0 4.500h8M4.500 0v8" stroke="#777"/></svg></button>
  <span class="ml-[13px] w-9 leading-[18px]">100%</span>
  <button aria-label="Еще" class="w-[27px] pb-2 text-[15px] leading-4 text-left text-[#666] pl-1">»</button>
</footer>

<script>
const NS = 'http://www.w3.org/2000/svg';
function put(host, tag, attrs, text) {
  const el = document.createElementNS(NS, tag);
  for (const k in attrs) el.setAttribute(k, attrs[k]);
  if (text !== undefined) el.textContent = text;
  host.appendChild(el);
}
const CM = 37.8;
// Horizontal ruler: origin at the left text margin
const h = document.getElementById('hruler');
for (let n = -1; n <= 18; n++) {
  const x = 75 + n * CM;
  if (n !== 0 && n !== 17) put(h, 'text', {x: x, y: 12, 'text-anchor': 'middle', 'font-size': 12, fill: '#666'}, Math.abs(n));
  if (n < 10) {
    for (const q of [-0.25, 0.25]) put(h, 'rect', {x: Math.round(x + q * CM), y: 7, width: 1, height: 2, fill: '#555'});
  }
  put(h, 'rect', {x: Math.round(x + CM / 2), y: 5, width: 1, height: 6, fill: '#555'});
}
put(h, 'rect', {x: Math.round(75 - 1.5 * CM), y: 5, width: 1, height: 6, fill: '#555'});
put(h, 'rect', {x: Math.round(75 - 1.75 * CM), y: 7, width: 1, height: 2, fill: '#555'});
for (let i = 1; i <= 13; i++) put(h, 'rect', {x: Math.round(76 + i * 47.2), y: 18, width: 1, height: 3, fill: '#888'});
// Vertical ruler: origin at the top text margin
const v = document.getElementById('vruler');
for (let n = 0; n <= 12; n++) {
  const y = 37 + n * CM;
  if (n) put(v, 'text', {x: 8, y: y + 5, 'text-anchor': 'middle', 'font-size': 12, fill: '#666'}, n);
  for (const q of [-0.75, -0.25]) put(v, 'rect', {x: 7, y: Math.round(y + q * CM), width: 2, height: 1, fill: '#555'});
  put(v, 'rect', {x: 5, y: Math.round(y - CM / 2), width: 6, height: 1, fill: '#555'});
}
</script>
</body>
</html>
